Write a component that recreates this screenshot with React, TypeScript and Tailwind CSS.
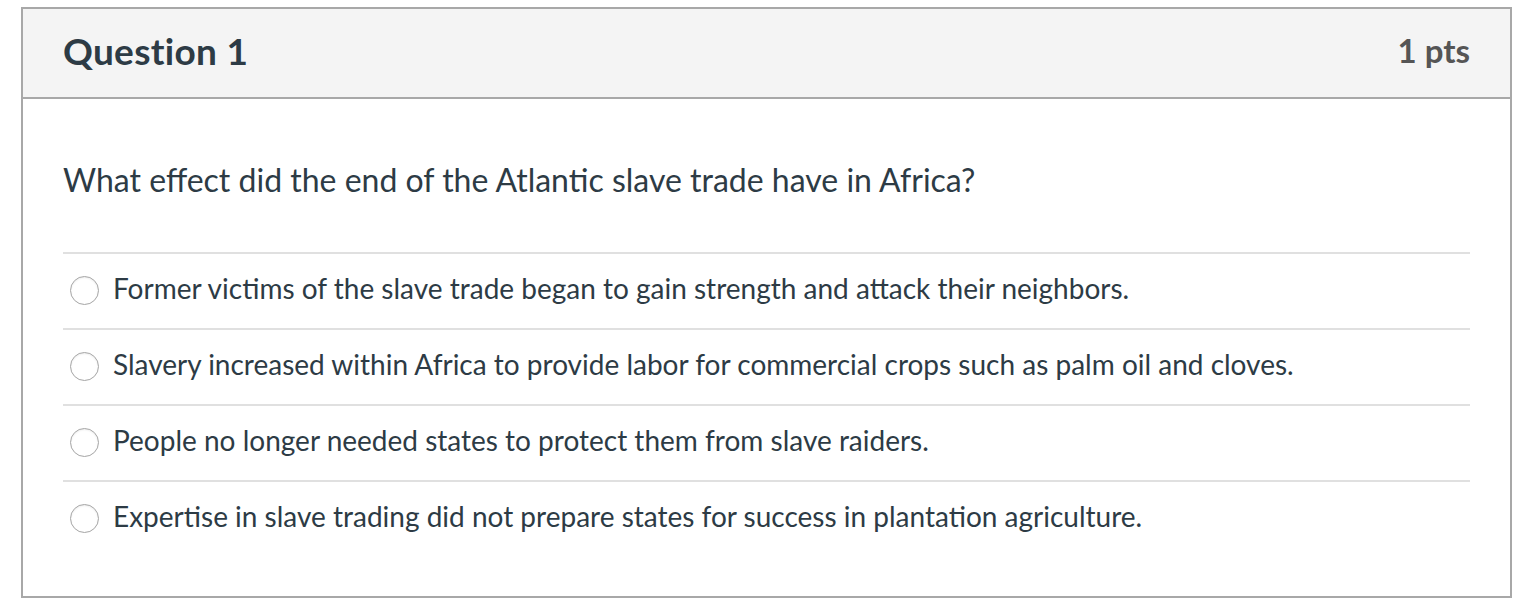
import React from "react";

const options = [
  "Former victims of the slave trade began to gain strength and attack their neighbors.",
  "Slavery increased within Africa to provide labor for commercial crops such as palm oil and cloves.",
  "People no longer needed states to protect them from slave raiders.",
  "Expertise in slave trading did not prepare states for success in plantation agriculture.",
];

export default function App() {
  return (
    <div
      className="w-[1518px] h-[608px] bg-white pt-[7px] pl-[21px]"
      style={{ fontFamily: "Lato, 'Open Sans', sans-serif" }}
    >
      <div className="w-[1491px] h-[591px] border-2 border-[#a8a8a8] flex flex-col">
        <div className="h-[90px] bg-[#f4f4f4] border-b-2 border-[#a8a8a8] flex items-center justify-between pl-[40px] pr-[40px] shrink-0">
          <div className="text-[37px] font-bold text-[#2d3b45] leading-none tracking-[0.3px] pb-[5px]">Question 1</div>
          <div className="text-[33px] font-bold text-[#555555] leading-none pb-[5px]">1 pts</div>
        </div>
        <div className="px-[40px] pt-[62px]">
          <div className="text-[32px] text-[#2d3b45] leading-[38px]">
            What effect did the end of the Atlantic slave trade have in Africa?
          </div>
          <div className="mt-[53px]">
            {options.map((o, i) => (
              <div
                key={i}
                className="h-[76px] border-t-2 border-[#e0e0e0] flex items-center pl-[7px] pb-[7px]"
              >
                <div className="w-[29px] h-[29px] rounded-full border-[1.5px] border-[#a5a5a5] bg-white shrink-0 shadow-[inset_0_1px_2px_rgba(0,0,0,0.08)] mt-[5px]" />
                <div className="ml-[14px] text-[28px] text-[#2d3b45] leading-none">{o}</div>
              </div>
            ))}
          </div>
        </div>
      </div>
    </div>
  );
}
